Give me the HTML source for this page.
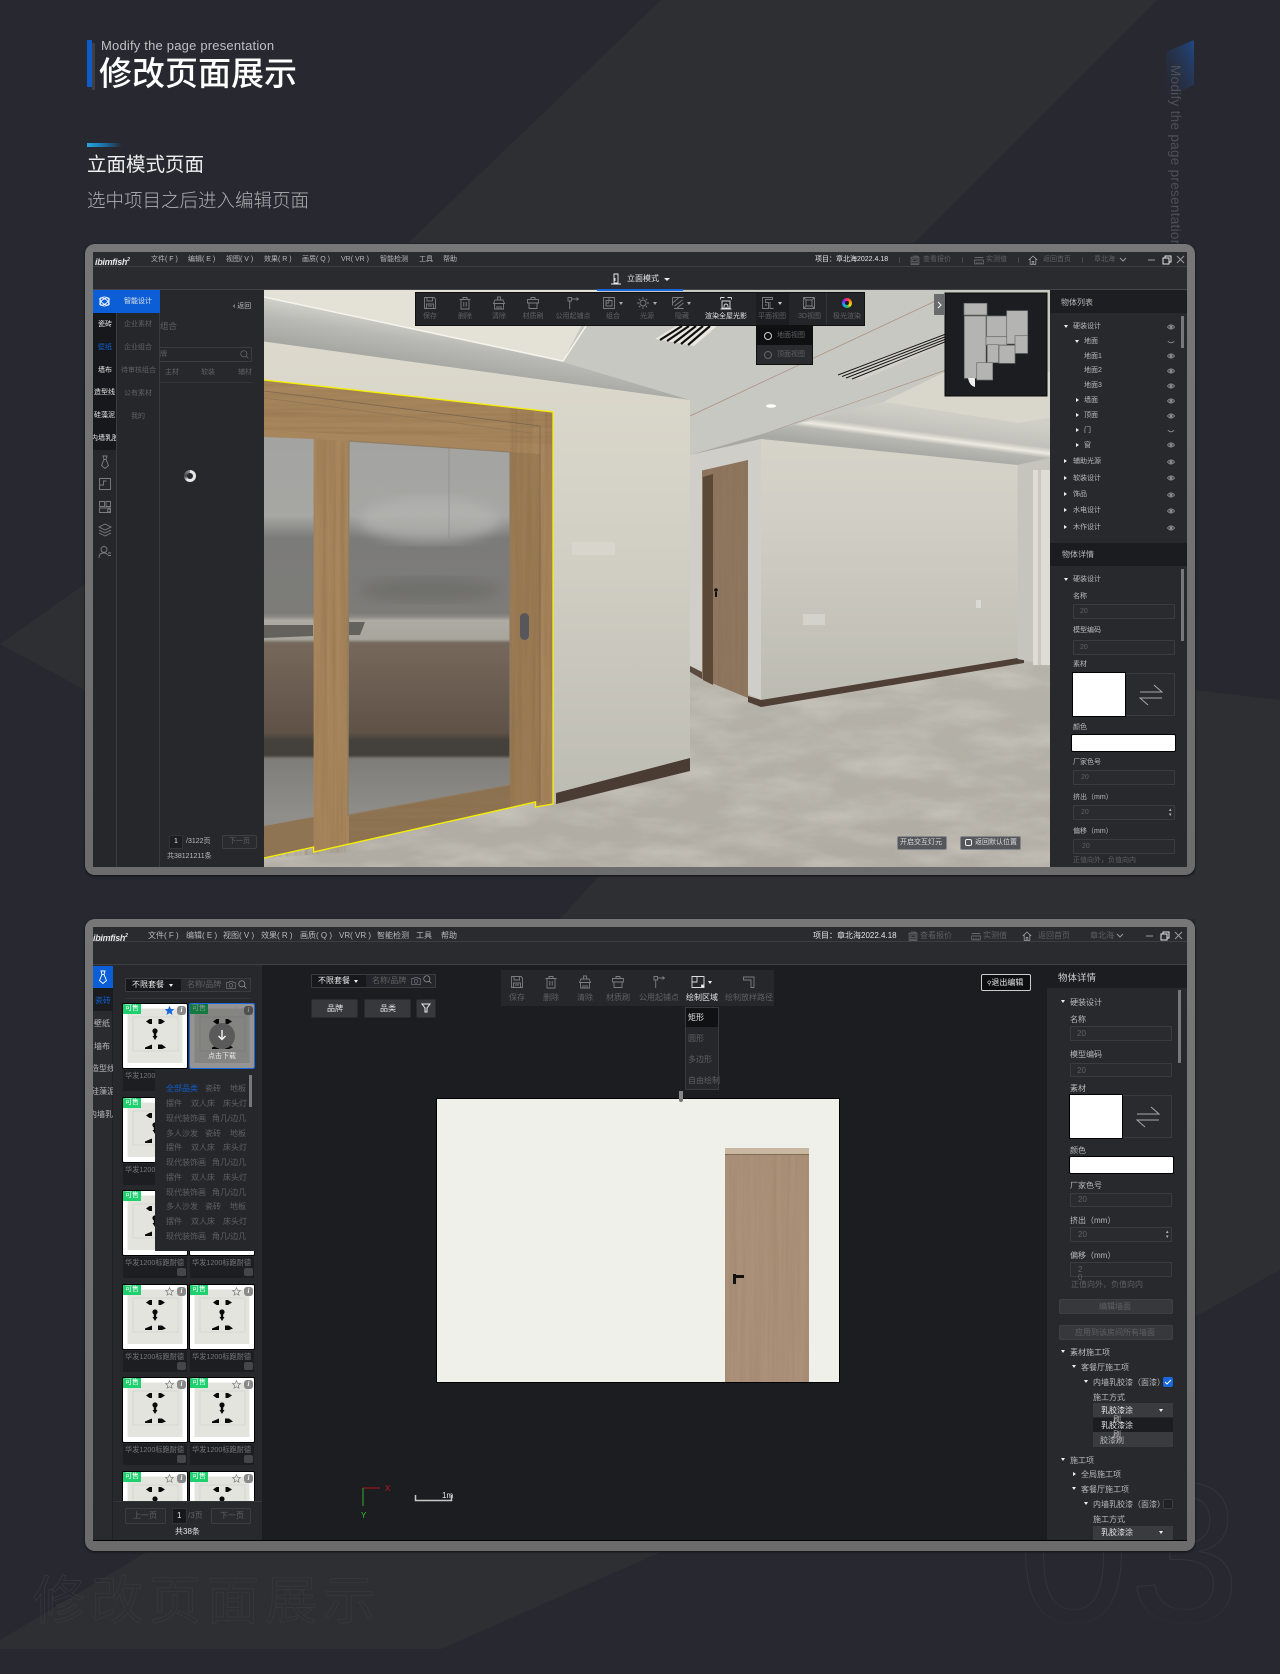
<!DOCTYPE html>
<html lang="zh"><head><meta charset="utf-8"><title>修改页面展示</title>
<style>
*{box-sizing:border-box}
html,body{margin:0;padding:0;background:#272830}
body{width:1280px;height:1649px;overflow:hidden;position:relative;font-family:"Liberation Sans","Noto Sans CJK SC",sans-serif}
p{position:absolute;margin:-6px 0 0;line-height:12px;white-space:nowrap;font-size:8px;color:#77787b}
.a{position:absolute}
.w{color:#e6e6e6}.m{color:#b9b9b9}.d{color:#5f6063}.b{color:#0d5fd0}
.s7{font-size:7px}
svg.i{position:absolute;width:14px;height:14px;stroke:#7c7d80;fill:none;stroke-width:.9;overflow:visible}
svg.e{position:absolute;width:8px;height:6px;stroke:#8b8c8f;fill:none;stroke-width:.9}
.clip{position:absolute;left:0;top:0;width:1280px;height:1649px}
.frame{position:absolute;background:linear-gradient(#777,#6c6c6c);border-radius:10px;box-shadow:0 1px 2px #111}
.inp{position:absolute;background:#2a2b2f;border:1px solid #3b3c40;border-radius:1px}
.tri{position:absolute;width:0;height:0;border-left:2.5px solid transparent;border-right:2.5px solid transparent;border-top:3.5px solid #eee}
.trr{position:absolute;width:0;height:0;border-top:2.5px solid transparent;border-bottom:2.5px solid transparent;border-left:3.5px solid #eee}
.btn{position:absolute;border:1px solid #3d3e42;border-radius:2px;background:#2a2b2f}
.c{position:absolute;width:64px;height:64px;background:#fff;box-shadow:0 0 0 1px #000;border-radius:1px}
.c>svg{position:absolute;left:0;top:0;width:64px;height:64px}
.c u{position:absolute;left:0;top:0;width:18px;height:10px;background:#1fd06f;color:#fff;font-size:7px;line-height:10px;text-align:center;text-decoration:none}
.c i{position:absolute;left:54px;top:2px;width:9px;height:9px;border-radius:3px;background:#8a8a8a;color:#fff;font:bold italic 7px/9px "Liberation Serif",serif;text-align:center}
.st{position:absolute;width:64px;height:21px;background:#1d1e22;color:#75767a;font-size:7.2px;line-height:12px;padding-left:2px;white-space:nowrap;overflow:hidden}
.st b{position:absolute;right:1px;bottom:2px;width:9px;height:8px;background:#45464a;border-radius:2px}
</style></head><body>
<svg width="0" height="0" style="position:absolute"><defs>
<symbol id="save" viewBox="0 0 14 14"><path d="M1.500 1.500h9.500l1.500 1.500v9.500h-11zM4 1.500v3.500h5.500v-3.500M3.500 12.500V8h7v4.500M5 10h4"/></symbol>
<symbol id="trash" viewBox="0 0 14 14"><path d="M1.500 3.500h11M5 3.500v-2h4v2M3 3.500v9.500h8V3.500M5.800 6v4.500M8.200 6v4.500"/></symbol>
<symbol id="clear" viewBox="0 0 14 14"><path d="M5.500 4V1h3v3M1.500 7.500L3 4h8l1.500 3.500zM2.500 7.500V13h9V7.500M5 10v3M7 10v3M9 10v3"/></symbol>
<symbol id="brush" viewBox="0 0 14 14"><path d="M5 3.500V1.500h4v2M1.500 3.500h11v3.500h-11zM3 7v5.500h8V7"/></symbol>
<symbol id="point" viewBox="0 0 14 14"><path d="M2 1.500h3.500v3.500H2zM3.700 5v8M5.500 3h6.500M10.500 1.500L12.500 3l-2 1.500"/></symbol>
<symbol id="group" viewBox="0 0 14 14"><path d="M1.500 1.500h11v11h-11zM4 4.500h6v5.500H4zM7 1.500v5M4 7h3"/></symbol>
<symbol id="light" viewBox="0 0 14 14"><circle cx="7" cy="7" r="3"/><path d="M7 1v2M7 11v2M1 7h2M11 7h2M2.800 2.800l1.400 1.400M9.800 9.800l1.400 1.400M2.800 11.200l1.400-1.400M9.800 4.200l1.400-1.400"/></symbol>
<symbol id="hide" viewBox="0 0 14 14"><path d="M1.500 1.500h11M1.500 1.500v8M1.500 7l6-5M3.500 10l8-6M6 12l6.500-5M3 12.500h9.500"/></symbol>
<symbol id="render" viewBox="0 0 14 14"><path d="M1.500 1.500h4M8.500 1.500h4M1.500 1.500v2M12.500 1.500v2M3 5h8v7H3zM5 11c0-4 4-4 4 0M1.500 13h11"/></symbol>
<symbol id="plan" viewBox="0 0 14 14"><path d="M1.500 1.500h10v2h-7v3h3v6h-6zM4 9h2M9 6v6.500h3.500"/></symbol>
<symbol id="d3" viewBox="0 0 14 14"><path d="M1.500 1.500h11v11h-11zM4 4h6v6H4zM1.500 1.500L4 4M12.500 1.500L10 4M1.500 12.500L4 10M12.500 12.500L10 10"/></symbol>
<symbol id="area" viewBox="0 0 14 14"><path d="M1 1.500h12v11H1zM1 7h5V1.500"/><rect x="10.500" y="10" width="2.500" height="2.500" fill="#fff"/></symbol>
<symbol id="path" viewBox="0 0 14 14"><path d="M1.500 2h10.500v10.500H9V5H1.500z"/></symbol>
<symbol id="eye" viewBox="0 0 8 6"><path d="M.5 3C2.500.3 5.500.3 7.500 3 5.500 5.700 2.500 5.700.5 3z"/><circle cx="4" cy="3" r="1.100" fill="#8b8c8f"/></symbol>
<symbol id="eoff" viewBox="0 0 8 6"><path d="M.8 2.200C3 4.400 5 4.400 7.200 2.200"/></symbol>
<symbol id="atom" viewBox="0 0 14 14"><ellipse cx="7" cy="7" rx="6" ry="2.600" transform="rotate(35 7 7)"/><ellipse cx="7" cy="7" rx="6" ry="2.600" transform="rotate(-35 7 7)"/><circle cx="7" cy="7" r="5"/></symbol>
<symbol id="tie" viewBox="0 0 14 14"><path d="M5 1h4L8 4.500l2.500 6L7 13.500l-3.500-3L6 4.500zM6 4.500h2"/></symbol>
<symbol id="room" viewBox="0 0 14 14"><path d="M1.500 1.500h11v11h-11zM1.500 8h4V4h3"/></symbol>
<symbol id="rooms" viewBox="0 0 14 14"><path d="M1.500 1.500h5v5h-5zM8 1.500h4.500v5H8zM1.500 8h11v4.500h-11z"/><circle cx="11" cy="10.500" r="1.500"/></symbol>
<symbol id="layer" viewBox="0 0 14 14"><path d="M7 1l6 3-6 3-6-3zM1 7l6 3 6-3M1 10l6 3 6-3"/></symbol>
<symbol id="user" viewBox="0 0 14 14"><circle cx="6" cy="4.500" r="3"/><path d="M1 13c0-4 2-5 5-5 1.500 0 3 .5 3.500 2M10 8h3M10 10.500h3"/></symbol>
<symbol id="home" viewBox="0 0 14 14"><path d="M1 7l6-5.500L13 7M3 5.500V13h8V5.500M5.800 13V9h2.400v4"/></symbol>
<symbol id="price" viewBox="0 0 14 14"><path d="M1.500 3h11v8.500h-11zM4 1.500h7v1.500M4 5.500h6v4H4zM1 13h12"/></symbol>
<symbol id="meas" viewBox="0 0 14 14"><path d="M1 3.500h12M1 7h12v5.500H1zM4 10v2.500M7 10v2.500M10 10v2.500"/></symbol>
<symbol id="search" viewBox="0 0 14 14"><circle cx="6" cy="6" r="4.800"/><path d="M9.500 9.500L13 13"/></symbol>
<symbol id="cam" viewBox="0 0 14 14"><path d="M1 3.500h3l1-1.500h4l1 1.500h3v8.500H1z"/><circle cx="7" cy="7.500" r="2.500"/></symbol>
<symbol id="swap" viewBox="0 0 24 22"><path d="M1 8h22L15 1M23 14H1l8 7" fill="none"/></symbol>
<symbol id="star" viewBox="0 0 14 14"><path d="M7 1l1.800 4 4.400.4-3.300 3 1 4.300L7 10.400l-3.900 2.300 1-4.300-3.300-3L5.200 5z"/></symbol>
<symbol id="sock" viewBox="0 0 64 64">
<rect x="4.500" y="4.500" width="55" height="54.500" fill="#e4e4df"/><rect x="10" y="13" width="45" height="34" fill="none" stroke="#d3d3ce" stroke-width=".7"/>
<g fill="#0a0a0a" stroke="none"><polygon points="23,17.500 26.500,15 29,15 29,20 26.500,20"/><polygon points="35.500,15 38,15 42,17.500 38,20 35.500,20"/><circle cx="32" cy="27" r="2.600"/><rect x="30.800" y="28" width="2.400" height="5"/><polygon points="29.500,32 34.500,32 32,36"/><polygon points="22,43.500 29,40.500 29,45 22,45"/><polygon points="35,40.500 39,40.500 43,43.500 39,45 35,45"/></g></symbol>
<filter id="wv" x="0" y="0" width="1" height="1"><feTurbulence type="fractalNoise" baseFrequency=".22 .006" numOctaves="3" seed="4"/><feColorMatrix values="0 0 0 0 .22  0 0 0 0 .13  0 0 0 0 .05  1.400 0 0 0 -.45"/><feComposite in2="SourceGraphic" operator="in"/></filter>
<filter id="wh" x="0" y="0" width="1" height="1"><feTurbulence type="fractalNoise" baseFrequency=".006 .22" numOctaves="3" seed="7"/><feColorMatrix values="0 0 0 0 .22  0 0 0 0 .13  0 0 0 0 .05  1.400 0 0 0 -.45"/><feComposite in2="SourceGraphic" operator="in"/></filter>
<filter id="mb" x="0" y="0" width="1" height="1"><feTurbulence type="fractalNoise" baseFrequency=".015 .045" numOctaves="4" seed="11"/><feColorMatrix values="0 0 0 0 .85  0 0 0 0 .83  0 0 0 0 .78  .6 0 0 0 -.22"/><feComposite in2="SourceGraphic" operator="in"/></filter>
<filter id="bl"><feGaussianBlur stdDeviation="6"/></filter>
<linearGradient id="gw" x1="0" y1="0" x2="0" y2="1"><stop offset="0" stop-color="#ddd9cd"/><stop offset=".5" stop-color="#d0cec3"/><stop offset="1" stop-color="#bdbcb3"/></linearGradient>
<linearGradient id="grw" x1="0" y1="0" x2="0" y2="1"><stop offset="0" stop-color="#d6d4c9"/><stop offset=".3" stop-color="#d1cfc5"/><stop offset="1" stop-color="#bcbbb2"/></linearGradient>
<linearGradient id="gf" x1="0" y1="0" x2="0" y2="1"><stop offset="0" stop-color="#b6b3aa"/><stop offset="1" stop-color="#b0aca3"/></linearGradient>
<linearGradient id="gg" gradientUnits="userSpaceOnUse" x1="0" y1="441" x2="0" y2="815"><stop offset="0" stop-color="#a3a3a1"/><stop offset=".2" stop-color="#a6a6a3"/><stop offset=".26" stop-color="#7b7b79"/><stop offset=".46" stop-color="#7d7c79"/><stop offset=".47" stop-color="#8c8a86"/><stop offset=".48" stop-color="#aeaba3"/><stop offset=".53" stop-color="#a8a59d"/><stop offset=".54" stop-color="#76695c"/><stop offset=".78" stop-color="#5f5246"/><stop offset=".8" stop-color="#44403b"/><stop offset=".84" stop-color="#44403b"/><stop offset=".85" stop-color="#7f7d79"/><stop offset="1" stop-color="#8f8e8a"/></linearGradient>
<linearGradient id="gr" gradientUnits="userSpaceOnUse" x1="264" y1="298" x2="257" y2="342"><stop offset="0" stop-color="#d0d0ca"/><stop offset=".4" stop-color="#b8b9b4"/><stop offset="1" stop-color="#a4a5a1"/></linearGradient>
<linearGradient id="gs" gradientUnits="userSpaceOnUse" x1="900" y1="405" x2="894" y2="452"><stop offset="0" stop-color="#d0cfc8"/><stop offset=".5" stop-color="#c2c1bb"/><stop offset=".62" stop-color="#eceae0"/><stop offset=".72" stop-color="#b8b8b3"/><stop offset="1" stop-color="#a8a8a4"/></linearGradient>
<linearGradient id="blu" x1="1" y1="0" x2="0" y2="1"><stop offset="0" stop-color="#1c5fc0"/><stop offset="1" stop-color="#2a3550" stop-opacity="0"/></linearGradient>
</defs></svg>

<!-- background shapes -->
<svg class="a" style="left:0;top:0" width="1280" height="1649">
<g fill="#2e2f33">
<polygon points="661,0 1157,0 914,243 408,243"/>
<polygon points="0,644 85,584 85,690"/>
<polygon points="1195,690 1280,700 1280,1270 1195,1317"/>
<polygon points="600,875 1195,875 1195,919 560,919"/>
<polygon points="147,1552 661,1552 441,1649 0,1649 0,1640"/>
</g>
<polygon points="1166,52 1194,40 1194,85 1166,98" fill="url(#blu)" opacity=".6"/>
</svg>

<!-- Titles -->
<div class="a" style="left:92px;top:43px;width:3px;height:47px;background:#3e4046"></div>
<div class="a" style="left:87px;top:40px;width:5px;height:47px;background:#0f5cc8"></div>
<p style="left:101px;top:46px;font-size:13px;line-height:18px;margin-top:-9px;color:#bfc0c3;letter-spacing:.2px">Modify the page presentation</p>
<p style="left:99px;top:74px;font-size:33px;line-height:44px;margin-top:-22px;color:#fff;font-weight:500">修改页面展示</p>
<div class="a" style="left:87px;top:143px;width:35px;height:4px;background:linear-gradient(90deg,#26a7e0,#1c6ea8 50%,transparent)"></div>
<p style="left:87px;top:165px;font-size:19.500px;line-height:28px;margin-top:-14px;color:#f0f0f0">立面模式页面</p>
<p style="left:87px;top:201px;font-size:18.500px;line-height:26px;margin-top:-13px;color:#aeafb2;font-weight:300">选中项目之后进入编辑页面</p>
<p style="left:1175px;top:65px;font-size:13.500px;line-height:16px;margin:0;color:#4f5057;transform-origin:0 0;transform:rotate(90deg) translateY(-8px);letter-spacing:.3px">Modify the page presentation</p>

<!-- decorative outlines -->
<p style="left:33px;top:1602px;font-size:52px;line-height:70px;margin-top:-35px;letter-spacing:6px;color:transparent;-webkit-text-stroke:.8px #37383e">修改页面展示</p>
<p style="left:1018px;top:1554px;font-size:200px;line-height:240px;margin-top:-120px;color:transparent;-webkit-text-stroke:1px #34353c;-webkit-mask-image:linear-gradient(#000 65%,transparent 85%)">03</p>

<!-- ================== FRAME 1 ================== -->
<div class="frame" style="left:85px;top:244px;width:1110px;height:631px"></div>
<div class="clip" style="clip-path:inset(252px 93px 782px 93px)">
<div class="a" style="left:93px;top:252px;width:1094px;height:615px;background:#28292d"></div>
<div class="a" style="left:93px;top:252px;width:1094px;height:38px;background:#2a2b2f"></div>
<div class="a" style="left:93px;top:266px;width:1094px;height:1px;background:#3d3e42"></div>
<div class="a" style="left:93px;top:289px;width:1094px;height:1px;background:#434448"></div>

<!-- Scene -->
<svg class="a" style="left:0;top:0" width="1280" height="1649">
<rect x="264" y="290" width="786" height="577" fill="#c8c8c2"/>
<polygon points="264,290 600,290 563,361 264,297" fill="#e4e1d7"/>
<polyline points="264,297 563,361 586,326" fill="none" stroke="#f5f3ec" stroke-width="1.500"/>
<polygon points="264,298 563,362 690,400 264,342" fill="url(#gr)"/>
<!-- center vent -->
<polygon points="655,339 694,346 717,326 676,326" fill="#e8e7e0"/>
<g stroke="#101010" stroke-width="2.200"><line x1="660" y1="340" x2="682" y2="326"/><line x1="667" y1="341" x2="689" y2="326"/><line x1="674" y1="343" x2="696" y2="326"/><line x1="681" y1="344" x2="703" y2="326"/><line x1="688" y1="345" x2="710" y2="326"/></g>
<!-- ceiling brown lines -->
<line x1="690" y1="416" x2="944" y2="297" stroke="#a99180" stroke-width=".8"/>
<line x1="690" y1="460" x2="946" y2="370" stroke="#a99180" stroke-width=".7"/>
<!-- right vent -->
<polygon points="836,375 862,380 946,343 946,333" fill="#d2d1cb"/>
<g stroke="#151515" stroke-width="1"><line x1="838" y1="375" x2="946" y2="334"/><line x1="842" y1="376.500" x2="946" y2="336.500"/><line x1="846" y1="378" x2="946" y2="339"/><line x1="852" y1="379" x2="946" y2="341.500"/></g>
<!-- right ceiling -->
<polygon points="883,402 945,372 1050,372 1050,418 1018,423" fill="#d9d6cb"/>
<polygon points="690,455 800,423 883,402 1018,423 1050,418 1050,458 1017,465 761,439" fill="url(#gs)"/>
<ellipse cx="771" cy="406" rx="5" ry="1.800" fill="#fff"/>
<!-- floor -->
<rect x="264" y="640" width="786" height="227" fill="url(#gf)"/>
<rect x="264" y="640" width="786" height="227" filter="url(#mb)" fill="#000"/>
<!-- corridor wall -->
<polygon points="690,455 761,439 761,700 690,666" fill="#cfcec8"/>
<polygon points="690,666 702,672 702,679 690,672" fill="#5b4a3e"/>
<polygon points="748,696 761,700 761,707 748,702" fill="#4e3e34"/>
<!-- corridor door -->
<polygon points="702,470.500 748,460 748,698 702,679" fill="#8e7660"/>
<polygon points="702,470.500 748,460 748,698 702,679" fill="#000" filter="url(#wv)" opacity=".3"/>
<polygon points="703,477 713,474 713,685 703,680" fill="#5b4837"/>
<circle cx="716" cy="590" r="1.800" fill="#111"/><rect x="715" y="592" width="2" height="5" fill="#111"/>
<!-- right wall -->
<polygon points="761,439 1017.600,465 1017.600,659 761,700" fill="url(#grw)"/>
<polygon points="761,700 1024,657 1024,663 761,707" fill="#503f35"/>
<rect x="803" y="614" width="22" height="11" fill="#d3d3cc"/><rect x="976" y="600" width="5" height="8" fill="#dadad4"/>
<!-- far right -->
<polygon points="1017.600,465 1050,458 1050,665 1017.600,659" fill="#c6c5bd"/>
<rect x="1033" y="470" width="17" height="195" fill="#dedcd4"/><rect x="1038" y="470" width="3" height="195" fill="#c9c8c0"/>
<!-- main wall -->
<polygon points="264,341.500 690,400 690,764 556,802 264,802" fill="url(#gw)"/>
<polygon points="556,793 690,758 690,771 556,804" fill="#4a3b33"/>
<rect x="572" y="542" width="43" height="13" fill="#d8d6cc"/>
<!-- door frame -->
<polygon points="264,380 553,412 553,804 535.500,807 535.500,802 313.600,852 313.600,847 264,858" fill="#a8865d"/>
<polygon points="264,380 553,412 553,445 264,430" fill="#000" filter="url(#wh)" opacity=".5"/>
<polygon points="264,437 349,441 349,852 264,858" fill="#000" filter="url(#wv)" opacity=".5"/>
<polygon points="510,408 553,412 553,804 535.500,807 535.500,802 510,808" fill="#000" filter="url(#wv)" opacity=".5"/>
<polygon points="510,452 540,454 540,802 510,808" fill="#7d6443" opacity=".3"/>
<polygon points="349,815 510,785 510,808 349,844" fill="#8e7453"/>
<polygon points="349,815 510,785 510,808 349,844" fill="#000" filter="url(#wh)" opacity=".4"/>
<polygon points="264,826 313.600,817 313.600,847 264,858" fill="#8e7453"/>
<polyline points="264,391 540,426 540,802" fill="none" stroke="#7a6750" stroke-width=".8"/>
<polyline points="264,398 532,433" fill="none" stroke="#8c7759" stroke-width=".8"/>
<!-- glass -->
<polygon points="349,441 510,452 510,785 348,815" fill="url(#gg)"/>
<polygon points="264,437 313.600,439 313.600,817 264,826" fill="url(#gg)"/>
<polygon points="264,625 313,625 313,636 264,638" fill="#333330" opacity=".6"/>
<polygon points="349,622 365,622 360,635 349,635" fill="#333330" opacity=".6"/>
<ellipse cx="430" cy="520" rx="70" ry="22" fill="#b5b5b2" opacity=".7" filter="url(#bl)"/>
<ellipse cx="430" cy="590" rx="70" ry="12" fill="#6b6a66" opacity=".7" filter="url(#bl)"/>
<line x1="449" y1="447" x2="449" y2="538" stroke="#8b8b88" stroke-width=".7"/>
<polygon points="349,441 510,452 510,785 348,815" fill="none" stroke="#8f7c62" stroke-width="1.200"/>
<rect x="520" y="613" width="9" height="27" rx="4.500" fill="#57565a"/>
<!-- yellow outline -->
<polyline points="264,380 553,412 553,804 535.500,807 535.500,802 313.600,852 313.600,847 264,858" fill="none" stroke="#f6f000" stroke-width="1.300"/>
<!-- minimap -->
<rect x="945" y="293" width="102" height="103" fill="#1c1d20" stroke="#0a0a0a"/>
<g fill="#b4b5b3" stroke="#6d6e6e" stroke-width=".7">
<rect x="964" y="303.300" width="23" height="11.700"/><rect x="964.300" y="316" width="21.700" height="62.300"/><rect x="986.700" y="316" width="20" height="20.700"/><rect x="1006.700" y="310.700" width="21" height="33.300"/><rect x="986" y="336.700" width="20.700" height="8.300"/><rect x="1015" y="335.700" width="12.700" height="17.700"/><rect x="987.300" y="344.700" width="11.300" height="18"/><rect x="999" y="345.300" width="16" height="18"/><rect x="976.700" y="362.700" width="16" height="17.300"/></g>
<path d="M968 378h7v9c-4-1-6-4-7-9z" fill="#eee"/>
<rect x="934" y="294" width="11" height="21" fill="#6a6b6d"/>
<path d="M938 302l3 3-3 3" fill="none" stroke="#fff"/>
</svg>

<!-- Scene top strip & small buttons -->
<div class="a" style="left:597px;top:289px;width:86px;height:1.500px;background:#1668dc"></div>
<div class="btn" style="left:897px;top:836px;width:50px;height:14px;background:#55565a;border-color:#85868a"></div><p class="w s7" style="left:900px;top:843px;color:#ddd">开启交互灯元</p>
<div class="btn" style="left:960px;top:836px;width:61px;height:14px;background:#55565a;border-color:#85868a"></div><p class="w s7" style="left:975px;top:843px;color:#ddd">返回默认位置</p>
<div class="a" style="left:965px;top:839px;width:7px;height:7px;border:1px solid #eee;border-radius:2px"></div>

<!-- Menu -->
<p class="w" style="left:95px;top:260px;font-size:9px;font-weight:bold;letter-spacing:-.3px;font-style:italic">ibimfish<span style="font-size:5px;vertical-align:super">2</span></p>
<p class="m s7" style="left:151px;top:260px">文件( F )</p><p class="m s7" style="left:188px;top:260px">编辑( E )</p><p class="m s7" style="left:226px;top:260px">视图( V )</p><p class="m s7" style="left:264px;top:260px">效果( R )</p><p class="m s7" style="left:302px;top:260px">画质( Q )</p><p class="m s7" style="left:341px;top:260px">VR( VR )</p><p class="m s7" style="left:380px;top:260px">智能检测</p><p class="m s7" style="left:419px;top:260px">工具</p><p class="m s7" style="left:443px;top:260px">帮助</p>
<p class="w s7" style="left:815px;top:260px">项目：章北海2022.4.18</p>
<svg class="i" style="left:910px;top:255px;width:10px;height:10px"><use href="#price"/></svg><p class="d s7" style="left:923px;top:260px">查看报价</p>
<svg class="i" style="left:974px;top:255px;width:10px;height:10px"><use href="#meas"/></svg><p class="d s7" style="left:986px;top:260px">实测值</p>
<svg class="i" style="left:1028px;top:255px;width:10px;height:10px;stroke:#bbb"><use href="#home"/></svg><p class="d s7" style="left:1043px;top:260px">返回首页</p>
<p class="d s7" style="left:1094px;top:260px">章北海</p>
<svg class="a" style="left:1119px;top:257px" width="8" height="6" fill="none" stroke="#999"><path d="M1 1l3 3 3-3"/></svg>
<div class="a" style="left:899px;top:257px;width:1px;height:6px;background:#45464a"></div><div class="a" style="left:962px;top:257px;width:1px;height:6px;background:#45464a"></div><div class="a" style="left:1018px;top:257px;width:1px;height:6px;background:#45464a"></div><div class="a" style="left:1082px;top:257px;width:1px;height:6px;background:#45464a"></div>
<svg class="a" style="left:1148px;top:254px" width="38" height="12" fill="none" stroke="#9a9b9e"><path d="M0 6h7"/><path d="M15 4h6v6h-6zM17 4V2h6v6h-2" stroke="#e6e6e6"/><path d="M29 2l7 7M36 2l-7 7"/></svg>
<svg class="i" style="left:610px;top:273px;width:12px;height:12px;stroke:#eee"><path d="M4 1h4v9H4zM1 11h10M5 5v3"/></svg>
<p class="w" style="left:627px;top:279px">立面模式</p><div class="tri" style="left:664px;top:278px;border-left-width:3px;border-right-width:3px"></div>

<!-- Left columns -->
<div class="a" style="left:160px;top:290px;width:104px;height:577px;background:#27282b"></div>
<p class="m s7" style="left:233px;top:307px"><span style="font-weight:bold">‹</span> 返回</p>
<p class="d" style="left:160px;top:326px;font-size:8.500px">组合</p>
<div class="inp" style="left:150px;top:347px;width:102px;height:15px;background:#26272a"></div><p class="d s7" style="left:160px;top:355px">牌</p>
<svg class="i" style="left:240px;top:350px;width:9px;height:9px"><use href="#search"/></svg>
<p class="d s7" style="left:165px;top:373px">主材</p><p class="d s7" style="left:201px;top:373px">软装</p><p class="d s7" style="left:238px;top:373px">辅材</p>
<div class="a" style="left:160px;top:382px;width:92px;height:1px;background:#34353a"></div>
<div class="a" style="left:184px;top:470px;width:12px;height:12px;border-radius:50%;background:conic-gradient(#e8e8e8 0 60%,#444 75%,#999 100%)"></div><div class="a" style="left:187px;top:473px;width:6px;height:6px;border-radius:50%;background:#27282b"></div>
<div class="a" style="left:169px;top:835px;width:14px;height:14px;background:#1d1e21;border:1px solid #333"></div><p class="w s7" style="left:174px;top:842px">1</p>
<p class="m s7" style="left:186px;top:842px">/3122页</p>
<div class="btn" style="left:222px;top:835px;width:35px;height:14px"></div><p class="d s7" style="left:229px;top:842px">下一页</p>
<p class="m s7" style="left:167px;top:857px">共38121211条</p>

<div class="a" style="left:116px;top:290px;width:44px;height:577px;background:#26272a;border-right:1px solid #3a3b3f;border-left:1px solid #3a3b3f"></div>
<div class="a" style="left:116px;top:290px;width:44px;height:23px;background:#0c5ed6"></div><p class="w s7" style="left:124px;top:302px">智能设计</p>
<p class="d s7" style="left:124px;top:325px">企业素材</p><p class="d s7" style="left:124px;top:348px">企业组合</p><p class="d s7" style="left:121px;top:371px">待审核组合</p><p class="d s7" style="left:124px;top:394px">公有素材</p><p class="d s7" style="left:131px;top:417px">我的</p>

<div class="a" style="left:93px;top:290px;width:23px;height:577px;background:#26272a"></div>
<div class="a" style="left:93px;top:313px;width:23px;height:137px;background:#17181b"></div>
<div class="a" style="left:93px;top:290px;width:23px;height:23px;background:#0c5ed6"></div>
<svg class="i" style="left:98px;top:295px;width:13px;height:13px;stroke:#fff"><use href="#atom"/></svg>
<div class="clip" style="clip-path:inset(0 1164px 0 93px)">
<p class="w s7" style="left:98px;top:325px">瓷砖</p><p class="b s7" style="left:98px;top:348px">壁纸</p><p class="w s7" style="left:98px;top:371px">墙布</p><p class="w s7" style="left:94px;top:393px">造型线</p><p class="w s7" style="left:94px;top:416px">硅藻泥</p><p class="w s7" style="left:91px;top:439px">内墙乳胶漆</p>
</div>
<svg class="i" style="left:98px;top:455px"><use href="#tie"/></svg>
<svg class="i" style="left:98px;top:477px"><use href="#room"/></svg>
<svg class="i" style="left:98px;top:500px"><use href="#rooms"/></svg>
<svg class="i" style="left:98px;top:523px"><use href="#layer"/></svg>
<svg class="i" style="left:98px;top:545px"><use href="#user"/></svg>

<!-- Toolbar -->
<div class="a" style="left:415px;top:292px;width:450px;height:34px;background:#242528;border:1px solid #111"></div>
<svg class="i" style="left:423px;top:296px"><use href="#save"/></svg><p class="d s7" style="left:423px;top:317px">保存</p>
<svg class="i" style="left:458px;top:296px"><use href="#trash"/></svg><p class="d s7" style="left:458px;top:317px">删除</p>
<svg class="i" style="left:492px;top:296px"><use href="#clear"/></svg><p class="d s7" style="left:492px;top:317px">清除</p>
<svg class="i" style="left:526px;top:296px"><use href="#brush"/></svg><p class="d s7" style="left:522.500px;top:317px">材质刷</p>
<svg class="i" style="left:566px;top:296px"><use href="#point"/></svg><p class="d s7" style="left:555.500px;top:317px">公用起铺点</p>
<svg class="i" style="left:602px;top:296px"><use href="#group"/></svg><div class="tri" style="left:619px;top:302px;border-top-color:#aaa"></div><p class="d s7" style="left:606px;top:317px">组合</p>
<svg class="i" style="left:636px;top:296px"><use href="#light"/></svg><div class="tri" style="left:653px;top:302px;border-top-color:#aaa"></div><p class="d s7" style="left:640px;top:317px">光源</p>
<svg class="i" style="left:671px;top:296px"><use href="#hide"/></svg><div class="tri" style="left:687px;top:302px;border-top-color:#aaa"></div><p class="d s7" style="left:675px;top:317px">隐藏</p>
<svg class="i" style="left:719px;top:296px;stroke:#ddd"><use href="#render"/></svg><p class="w s7" style="left:705px;top:317px">渲染全屋光影</p>
<div class="a" style="left:756px;top:293px;width:33px;height:32px;background:#1c1d20"></div>
<svg class="i" style="left:761px;top:296px"><use href="#plan"/></svg><div class="tri" style="left:778px;top:302px;border-top-color:#ccc"></div><p class="d s7" style="left:758px;top:317px">平面视图</p>
<svg class="i" style="left:802px;top:296px"><use href="#d3"/></svg><p class="d s7" style="left:798px;top:317px">3D视图</p>
<div class="a" style="left:826px;top:293px;width:1px;height:32px;background:#33343a"></div>
<div class="a" style="left:842px;top:298px;width:10px;height:10px;border-radius:50%;background:conic-gradient(#ff2a6a,#ff8a00,#ffe100,#26c06a,#18a8ff,#7a2cff,#ff2a6a)"></div><div class="a" style="left:845px;top:301px;width:4px;height:4px;border-radius:50%;background:#1a1a1a"></div>
<p class="d s7" style="left:833px;top:317px">极光渲染</p>
<!-- dropdown -->
<div class="a" style="left:756px;top:326px;width:57px;height:39px;background:#2a2b2e;border:1px solid #111"></div>
<div class="a" style="left:757px;top:327px;width:55px;height:18px;background:#0f1012"></div>
<div class="a" style="left:764px;top:332px;width:8px;height:8px;border:1px solid #ccc;border-radius:50%"></div><p class="d s7" style="left:777px;top:336px">地面视图</p>
<div class="a" style="left:764px;top:351px;width:8px;height:8px;border:1px solid #666;border-radius:50%"></div><p class="d s7" style="left:777px;top:355px">顶面视图</p>

<!-- Right panel -->
<div class="a" style="left:1050px;top:290px;width:137px;height:577px;background:#28292d"></div>
<div class="a" style="left:1050px;top:290px;width:137px;height:23px;background:#1d1e21"></div><p class="m" style="left:1061px;top:303px">物体列表</p>
<div class="tri" style="left:1064px;top:325px"></div><p class="m s7" style="left:1073px;top:327px">硬装设计</p>
<div class="tri" style="left:1075px;top:340px"></div><p class="m s7" style="left:1084px;top:342px">地面</p>
<p class="m s7" style="left:1084px;top:356.500px">地面1</p><p class="m s7" style="left:1084px;top:371px">地面2</p><p class="m s7" style="left:1084px;top:386px">地面3</p>
<div class="trr" style="left:1076px;top:398px"></div><p class="m s7" style="left:1084px;top:401px">墙面</p>
<div class="trr" style="left:1076px;top:413px"></div><p class="m s7" style="left:1084px;top:416px">顶面</p>
<div class="trr" style="left:1076px;top:428px"></div><p class="m s7" style="left:1084px;top:430.500px">门</p>
<div class="trr" style="left:1076px;top:443px"></div><p class="m s7" style="left:1084px;top:445.500px">窗</p>
<div class="trr" style="left:1064px;top:459px"></div><p class="m s7" style="left:1073px;top:462px">辅助光源</p>
<div class="trr" style="left:1064px;top:476px"></div><p class="m s7" style="left:1073px;top:478.500px">软装设计</p>
<div class="trr" style="left:1064px;top:492px"></div><p class="m s7" style="left:1073px;top:495px">饰品</p>
<div class="trr" style="left:1064px;top:508px"></div><p class="m s7" style="left:1073px;top:511px">水电设计</p>
<div class="trr" style="left:1064px;top:525px"></div><p class="m s7" style="left:1073px;top:528px">木作设计</p>
<svg class="e" style="left:1167px;top:324px"><use href="#eye"/></svg><svg class="e" style="left:1167px;top:339px"><use href="#eoff"/></svg><svg class="e" style="left:1167px;top:353px"><use href="#eye"/></svg><svg class="e" style="left:1167px;top:368px"><use href="#eye"/></svg><svg class="e" style="left:1167px;top:383px"><use href="#eye"/></svg><svg class="e" style="left:1167px;top:398px"><use href="#eye"/></svg><svg class="e" style="left:1167px;top:413px"><use href="#eye"/></svg><svg class="e" style="left:1167px;top:428px"><use href="#eoff"/></svg><svg class="e" style="left:1167px;top:442px"><use href="#eye"/></svg><svg class="e" style="left:1167px;top:459px"><use href="#eye"/></svg><svg class="e" style="left:1167px;top:475px"><use href="#eye"/></svg><svg class="e" style="left:1167px;top:492px"><use href="#eye"/></svg><svg class="e" style="left:1167px;top:508px"><use href="#eye"/></svg><svg class="e" style="left:1167px;top:525px"><use href="#eye"/></svg>
<div class="a" style="left:1181px;top:316px;width:3px;height:32px;background:#77787b"></div>
<div class="a" style="left:1050px;top:543px;width:137px;height:23px;background:#1b1c1f"></div><p class="m" style="left:1062px;top:555px">物体详情</p>
<div class="tri" style="left:1064px;top:578px"></div><p class="m s7" style="left:1073px;top:580px">硬装设计</p>
<p class="m s7" style="left:1073px;top:597px">名称</p><div class="inp" style="left:1073px;top:604px;width:102px;height:15px"></div><p class="d s7" style="left:1080px;top:612px">20</p>
<p class="m s7" style="left:1073px;top:631px">模型编码</p><div class="inp" style="left:1073px;top:640px;width:102px;height:15px"></div><p class="d s7" style="left:1080px;top:648px">20</p>
<p class="m s7" style="left:1073px;top:665px">素材</p><div class="inp" style="left:1073px;top:673px;width:102px;height:43px"></div><div class="a" style="left:1073px;top:673px;width:52px;height:43px;background:#fff;box-shadow:0 0 0 1px #000"></div>
<svg class="a" style="left:1139px;top:684px" width="24" height="22" stroke="#aaa" fill="none"><use href="#swap"/></svg>
<p class="m s7" style="left:1073px;top:728px">颜色</p><div class="a" style="left:1072px;top:735px;width:103px;height:16px;background:#fff;box-shadow:0 0 0 1px #000;border-radius:1px"></div>
<p class="m s7" style="left:1073px;top:763px">厂家色号</p><div class="inp" style="left:1073px;top:770px;width:102px;height:15px"></div><p class="d s7" style="left:1081px;top:778px">20</p>
<p class="m s7" style="left:1073px;top:798px">挤出（mm）</p><div class="inp" style="left:1073px;top:805px;width:102px;height:15px"></div><p class="d s7" style="left:1081px;top:813px">20</p><p class="m" style="left:1169px;top:813px;font-size:5px;line-height:5px;margin-top:-5px;white-space:normal;width:5px">▴<br>▾</p>
<p class="m s7" style="left:1073px;top:832px">偏移（mm）</p><div class="inp" style="left:1073px;top:839px;width:102px;height:15px"></div><p class="d s7" style="left:1082px;top:847px">20</p>
<p class="d s7" style="left:1073px;top:861px">正值向外，负值向内</p>
<div class="a" style="left:1181px;top:569px;width:3px;height:72px;background:#77787b"></div>
</div>

<!-- ================== FRAME 2 ================== -->
<div class="frame" style="left:85px;top:919px;width:1110px;height:632px"></div>
<div class="clip" style="clip-path:inset(927px 93px 108px 93px)">
<div class="a" style="left:93px;top:927px;width:1094px;height:614px;background:#1c1d20"></div>
<div class="a" style="left:93px;top:927px;width:1094px;height:38px;background:#2a2b2f"></div>
<div class="a" style="left:93px;top:941px;width:1094px;height:1px;background:#3d3e42"></div>
<div class="a" style="left:93px;top:964px;width:1094px;height:1px;background:#3e3f43"></div>
<p class="w" style="left:93px;top:936px;font-size:9px;font-weight:bold;letter-spacing:-.3px;font-style:italic">ibimfish<span style="font-size:5px;vertical-align:super">2</span></p>
<p class="m" style="left:148px;top:936px">文件( F )</p><p class="m" style="left:186px;top:936px">编辑( E )</p><p class="m" style="left:223px;top:936px">视图( V )</p><p class="m" style="left:261px;top:936px">效果( R )</p><p class="m" style="left:300px;top:936px">画质( Q )</p><p class="m" style="left:339px;top:936px">VR( VR )</p><p class="m" style="left:377px;top:936px">智能检测</p><p class="m" style="left:416px;top:936px">工具</p><p class="m" style="left:441px;top:936px">帮助</p>
<p class="w" style="left:813px;top:936px">项目：章北海2022.4.18</p>
<svg class="i" style="left:908px;top:931px;width:10px;height:10px"><use href="#price"/></svg><p class="d" style="left:920px;top:936px">查看报价</p>
<svg class="i" style="left:971px;top:931px;width:10px;height:10px"><use href="#meas"/></svg><p class="d" style="left:983px;top:936px">实测值</p>
<svg class="i" style="left:1022px;top:931px;width:10px;height:10px;stroke:#bbb"><use href="#home"/></svg><p class="d" style="left:1038px;top:936px">返回首页</p>
<p class="d" style="left:1090px;top:936px">章北海</p>
<svg class="a" style="left:1116px;top:933px" width="8" height="6" fill="none" stroke="#999"><path d="M1 1l3 3 3-3"/></svg>
<svg class="a" style="left:1146px;top:930px" width="38" height="12" fill="none" stroke="#9a9b9e"><path d="M0 6h7"/><path d="M15 4h6v6h-6zM17 4V2h6v6h-2" stroke="#e6e6e6"/><path d="M29 2l7 7M36 2l-7 7"/></svg>

<!-- left column -->
<div class="a" style="left:113px;top:965px;width:149px;height:576px;background:#27282c"></div>
<div class="a" style="left:93px;top:965px;width:20px;height:576px;background:#2a2b2f;border-right:1px solid #1f2023"></div>
<div class="a" style="left:93px;top:966px;width:20px;height:22px;background:#0c5ed6"></div>
<svg class="i" style="left:96px;top:970px;stroke:#fff"><use href="#tie"/></svg>
<div class="a" style="left:93px;top:988px;width:20px;height:23px;background:#1b1c1f"></div>
<div class="clip" style="clip-path:inset(0 1167px 0 93px)">
<p class="b" style="left:95px;top:1001px">瓷砖</p><p class="m" style="left:94px;top:1024px">壁纸</p><p class="m" style="left:94px;top:1047px">墙布</p><p class="m" style="left:91px;top:1069px">造型线</p><p class="m" style="left:91px;top:1092px">硅藻泥</p><p class="m" style="left:89px;top:1115px">内墙乳胶漆</p>
</div>
<div class="inp" style="left:125px;top:978px;width:126px;height:14px;background:#2a2b2f"></div><div class="a" style="left:126px;top:979px;width:55px;height:12px;background:#17181b"></div>
<p class="w" style="left:132px;top:985px">不限套餐</p><div class="tri" style="left:169px;top:984px"></div><p class="d" style="left:187px;top:985px">名称/品牌</p>
<svg class="i" style="left:226px;top:980px;width:10px;height:10px"><use href="#cam"/></svg><svg class="i" style="left:238px;top:980px;width:9px;height:9px;stroke:#bbb"><use href="#search"/></svg>
<div class="a" style="left:125px;top:998px;width:126px;height:1px;background:#33343a"></div>

<!-- cards rows -->
<div class="c" style="left:123px;top:1004px"><svg><use href="#sock"/></svg><u>可售</u><svg style="left:42px;top:2px;width:9px;height:9px;fill:#1668dc;stroke:#1668dc"><use href="#star"/></svg><i>i</i></div>
<div class="st" style="left:123px;top:1070px">华发1200标跑耐德</div>
<div class="c" style="left:190px;top:1004px;box-shadow:0 0 0 1px #1668dc"><svg><use href="#sock"/></svg><u>可售</u><i>i</i>
<div class="a" style="left:0;top:0;width:64px;height:64px;background:rgba(0,0,0,.42)"></div>
<div class="a" style="left:19px;top:19px;width:26px;height:26px;border-radius:50%;background:#5a5a5a"></div>
<svg style="left:0;top:0" stroke="#fff" fill="none" stroke-width="1.300"><path d="M32 26v9M28.500 32l3.500 3.500 3.500-3.500"/></svg>
<p class="w s7" style="left:18px;top:53px">点击下载</p>
<svg style="left:42px;top:2px;width:9px;height:9px;fill:none;stroke:#888"><use href="#star"/></svg></div>
<div class="st" style="left:190px;top:1070px">华发1200标跑耐德<b></b></div>
<div class="c" style="left:123px;top:1098px"><svg><use href="#sock"/></svg><u>可售</u></div>
<div class="st" style="left:123px;top:1164px">华发1200标跑耐德</div>
<div class="c" style="left:190px;top:1098px"></div><div class="st" style="left:190px;top:1164px"></div>
<div class="c" style="left:123px;top:1191px"><svg><use href="#sock"/></svg><u>可售</u></div>
<div class="st" style="left:123px;top:1257px">华发1200标跑耐德<b></b></div>
<div class="c" style="left:190px;top:1191px"></div>
<div class="st" style="left:190px;top:1257px">华发1200标跑耐德<b></b></div>

<div class="c" style="left:123px;top:1285px"><svg><use href="#sock"/></svg><u>可售</u><svg style="left:42px;top:2px;width:9px;height:9px;fill:none;stroke:#777"><use href="#star"/></svg><i>i</i></div>
<div class="st" style="left:123px;top:1351px">华发1200标跑耐德<b></b></div>
<div class="c" style="left:190px;top:1285px"><svg><use href="#sock"/></svg><u>可售</u><svg style="left:42px;top:2px;width:9px;height:9px;fill:none;stroke:#777"><use href="#star"/></svg><i>i</i></div>
<div class="st" style="left:190px;top:1351px">华发1200标跑耐德<b></b></div>
<div class="c" style="left:123px;top:1378px"><svg><use href="#sock"/></svg><u>可售</u><svg style="left:42px;top:2px;width:9px;height:9px;fill:none;stroke:#777"><use href="#star"/></svg><i>i</i></div>
<div class="st" style="left:123px;top:1444px">华发1200标跑耐德<b></b></div>
<div class="c" style="left:190px;top:1378px"><svg><use href="#sock"/></svg><u>可售</u><svg style="left:42px;top:2px;width:9px;height:9px;fill:none;stroke:#777"><use href="#star"/></svg><i>i</i></div>
<div class="st" style="left:190px;top:1444px">华发1200标跑耐德<b></b></div>
<div class="c" style="left:123px;top:1472px"><svg><use href="#sock"/></svg><u>可售</u><svg style="left:42px;top:2px;width:9px;height:9px;fill:none;stroke:#777"><use href="#star"/></svg><i>i</i></div>
<div class="c" style="left:190px;top:1472px"><svg><use href="#sock"/></svg><u>可售</u><svg style="left:42px;top:2px;width:9px;height:9px;fill:none;stroke:#777"><use href="#star"/></svg><i>i</i></div>

<!-- category dropdown -->
<div class="a" style="left:155px;top:1070px;width:100px;height:181px;background:#26272a"></div>
<div class="a" style="left:249px;top:1075px;width:3px;height:32px;background:#77787b"></div>
<p class="b" style="left:166px;top:1089px">全部品类</p><p class="d" style="left:205px;top:1089px">瓷砖</p><p class="d" style="left:230px;top:1089px">地板</p>
<p class="d" style="left:166px;top:1104px">摆件</p><p class="d" style="left:191px;top:1104px">双人床</p><p class="d" style="left:223px;top:1104px">床头灯</p>
<p class="d" style="left:166px;top:1119px">现代装饰画</p><p class="d" style="left:212px;top:1119px">角几/边几</p>
<p class="d" style="left:166px;top:1134px">多人沙发</p><p class="d" style="left:205px;top:1134px">瓷砖</p><p class="d" style="left:230px;top:1134px">地板</p>
<p class="d" style="left:166px;top:1148px">摆件</p><p class="d" style="left:191px;top:1148px">双人床</p><p class="d" style="left:223px;top:1148px">床头灯</p>
<p class="d" style="left:166px;top:1163px">现代装饰画</p><p class="d" style="left:212px;top:1163px">角几/边几</p>
<p class="d" style="left:166px;top:1178px">摆件</p><p class="d" style="left:191px;top:1178px">双人床</p><p class="d" style="left:223px;top:1178px">床头灯</p>
<p class="d" style="left:166px;top:1193px">现代装饰画</p><p class="d" style="left:212px;top:1193px">角几/边几</p>
<p class="d" style="left:166px;top:1207px">多人沙发</p><p class="d" style="left:205px;top:1207px">瓷砖</p><p class="d" style="left:230px;top:1207px">地板</p>
<p class="d" style="left:166px;top:1222px">摆件</p><p class="d" style="left:191px;top:1222px">双人床</p><p class="d" style="left:223px;top:1222px">床头灯</p>
<p class="d" style="left:166px;top:1237px">现代装饰画</p><p class="d" style="left:212px;top:1237px">角几/边几</p>

<!-- left pager -->
<div class="a" style="left:113px;top:1501px;width:149px;height:40px;background:#28292c;border-top:1px solid #35363a"></div>
<div class="btn" style="left:125px;top:1508px;width:41px;height:16px"></div><p class="d" style="left:133px;top:1516px">上一页</p>
<div class="a" style="left:172px;top:1508px;width:15px;height:16px;background:#17181b;border:1px solid #333"></div><p class="w" style="left:177px;top:1516px">1</p>
<p class="d" style="left:188px;top:1516px">/3页</p>
<div class="btn" style="left:211px;top:1508px;width:40px;height:16px"></div><p class="d" style="left:220px;top:1516px">下一页</p>
<p class="w" style="left:175px;top:1532px">共38条</p>

<!-- Canvas controls -->
<div class="inp" style="left:311px;top:974px;width:125px;height:14px;background:#24252a"></div><div class="a" style="left:312px;top:975px;width:54px;height:12px;background:#17181b"></div>
<p class="w" style="left:318px;top:981px">不限套餐</p><div class="tri" style="left:354px;top:980px"></div><p class="d" style="left:372px;top:981px">名称/品牌</p>
<svg class="i" style="left:411px;top:976px;width:10px;height:10px"><use href="#cam"/></svg><svg class="i" style="left:423px;top:975px;width:9px;height:9px;stroke:#bbb"><use href="#search"/></svg>
<div class="btn" style="left:311px;top:999px;width:47px;height:19px;background:#37383c;border-color:#2a2b2e"></div><p class="w" style="left:327px;top:1009px">品牌</p>
<div class="btn" style="left:364px;top:999px;width:47px;height:19px;background:#37383c;border-color:#2a2b2e"></div><p class="w" style="left:380px;top:1009px">品类</p>
<div class="btn" style="left:416px;top:999px;width:20px;height:19px;background:#37383c;border-color:#2a2b2e"></div>
<svg class="a" style="left:421px;top:1003px" width="10" height="10" fill="none" stroke="#eee"><path d="M1 1h8L6 5v4H4V5z"/></svg>

<div class="a" style="left:501px;top:970px;width:273px;height:36px;background:#26272a"></div>
<svg class="i" style="left:510px;top:975px"><use href="#save"/></svg><p class="d" style="left:509px;top:998px">保存</p>
<svg class="i" style="left:544px;top:975px"><use href="#trash"/></svg><p class="d" style="left:543px;top:998px">删除</p>
<svg class="i" style="left:578px;top:975px"><use href="#clear"/></svg><p class="d" style="left:577px;top:998px">清除</p>
<svg class="i" style="left:611px;top:975px"><use href="#brush"/></svg><p class="d" style="left:606px;top:998px">材质刷</p>
<svg class="i" style="left:652px;top:975px"><use href="#point"/></svg><p class="d" style="left:639px;top:998px">公用起铺点</p>
<svg class="i" style="left:691px;top:975px;stroke:#ddd"><use href="#area"/></svg><div class="tri" style="left:708px;top:981px"></div><p class="w" style="left:686px;top:998px">绘制区域</p>
<svg class="i" style="left:742px;top:975px"><use href="#path"/></svg><p class="d" style="left:725px;top:998px">绘制放样路径</p>

<div class="a" style="left:685px;top:1007px;width:34px;height:83px;background:#26272a;border:1px solid #3a3b3f"></div>
<div class="a" style="left:686px;top:1008px;width:32px;height:19px;background:#101113"></div>
<p class="w" style="left:688px;top:1018px">矩形</p><p class="d" style="left:688px;top:1039px">圆形</p><p class="d" style="left:688px;top:1060px">多边形</p>
<div class="clip" style="clip-path:inset(0 560px 0 685px)"><p class="d" style="left:688px;top:1081px">自由绘制</p></div>

<div class="a" style="left:981px;top:974px;width:50px;height:17px;background:#0d0e10;border:1px solid #ccc;border-radius:2px"></div>
<p class="w" style="left:987px;top:983px"><span style="font-size:6px">⚲</span>退出编辑</p>

<!-- canvas -->
<div class="a" style="left:437px;top:1099px;width:402px;height:283px;background:#f0f0ea;box-shadow:0 0 0 1px #000"></div>
<div class="a" style="left:679px;top:1091px;width:4px;height:8px;background:#888"></div><div class="a" style="left:679px;top:1099px;width:4px;height:3px;background:#777;border-radius:0 0 2px 2px"></div>
<svg class="a" style="left:0;top:0" width="1280" height="1649">
<rect x="725" y="1148" width="84" height="234" fill="#ab917a"/>
<rect x="725" y="1148" width="84" height="234" fill="#000" filter="url(#wv)" opacity=".22"/>
<rect x="725" y="1148" width="84" height="7" fill="#c9b7a2"/>
<rect x="725" y="1154" width="84" height="1" fill="#7f6a56"/>
<rect x="733" y="1274" width="3" height="10" fill="#111"/><rect x="735" y="1275" width="9" height="3" fill="#111"/>
</svg>

<svg class="a" style="left:0;top:0" width="1280" height="1649" fill="none">
<path d="M363 1488h17" stroke="#7c1818" stroke-width="1.500"/><path d="M363 1488v18" stroke="#2f7d2b" stroke-width="1.500"/>
<path d="M415.500 1495v5.500h36v-5.500" stroke="#c8c8c8" stroke-width="1.500"/>
</svg>
<p style="left:385px;top:1489px;color:#c01818;font-size:8px">X</p><p style="left:361px;top:1516px;color:#2fc42b;font-size:8px">Y</p><p class="w" style="left:442px;top:1496px;font-size:8px">1m</p>

<!-- Right panel 2 -->
<div class="a" style="left:1047px;top:965px;width:140px;height:576px;background:#28292d"></div>
<div class="a" style="left:1047px;top:965px;width:140px;height:23px;background:#1c1d20"></div><p class="w" style="left:1058px;top:979px;font-size:9.500px;color:#ccc">物体详情</p>
<div class="tri" style="left:1061px;top:1000px"></div><p class="m" style="left:1070px;top:1003px">硬装设计</p>
<p class="m" style="left:1070px;top:1020px">名称</p><div class="inp" style="left:1070px;top:1026px;width:102px;height:15px"></div><p class="d" style="left:1077px;top:1034px">20</p>
<p class="m" style="left:1070px;top:1055px">模型编码</p><div class="inp" style="left:1070px;top:1063px;width:102px;height:14px"></div><p class="d" style="left:1077px;top:1071px">20</p>
<p class="m" style="left:1070px;top:1089px">素材</p><div class="inp" style="left:1070px;top:1095px;width:102px;height:43px"></div><div class="a" style="left:1070px;top:1095px;width:52px;height:43px;background:#fff;box-shadow:0 0 0 1px #000"></div>
<svg class="a" style="left:1136px;top:1106px" width="24" height="22" stroke="#aaa" fill="none"><use href="#swap"/></svg>
<p class="m" style="left:1070px;top:1151px">颜色</p><div class="a" style="left:1070px;top:1157px;width:103px;height:16px;background:#fff;box-shadow:0 0 0 1px #000;border-radius:1px"></div>
<p class="m" style="left:1070px;top:1186px">厂家色号</p><div class="inp" style="left:1070px;top:1193px;width:102px;height:14px"></div><p class="d" style="left:1078px;top:1200px">20</p>
<p class="m" style="left:1070px;top:1221px">挤出（mm）</p><div class="inp" style="left:1070px;top:1227px;width:102px;height:15px"></div><p class="d" style="left:1078px;top:1235px">20</p><p class="m" style="left:1166px;top:1235px;font-size:5px;line-height:5px;margin-top:-5px;white-space:normal;width:5px">▴<br>▾</p>
<p class="m" style="left:1070px;top:1256px">偏移（mm）</p><div class="inp" style="left:1070px;top:1262px;width:102px;height:15px"></div><p class="d" style="left:1078px;top:1270px">2</p><p class="d" style="left:1078px;top:1278px">0</p>
<p class="d" style="left:1071px;top:1285px">正值向外，负值向内</p>
<div class="a" style="left:1178px;top:990px;width:3px;height:73px;background:#77787b"></div>
<div class="btn" style="left:1059px;top:1299px;width:114px;height:15px;background:#37383c;border-color:#3f4044"></div><p class="d" style="left:1099px;top:1307px">编辑墙面</p>
<div class="btn" style="left:1059px;top:1325px;width:114px;height:15px;background:#37383c;border-color:#3f4044"></div><p class="d" style="left:1075px;top:1333px">应用到该房间所有墙面</p>
<div class="tri" style="left:1061px;top:1350px"></div><p class="m" style="left:1070px;top:1353px">素材施工项</p>
<div class="tri" style="left:1072px;top:1365px"></div><p class="m" style="left:1081px;top:1368px">客餐厅施工项</p>
<div class="tri" style="left:1084px;top:1380px"></div><p class="m" style="left:1093px;top:1383px">内墙乳胶漆（面漆）</p>
<div class="a" style="left:1163px;top:1377px;width:10px;height:10px;background:#1668dc;border-radius:2px"></div><svg class="a" style="left:1163px;top:1377px" width="10" height="10" fill="none" stroke="#fff"><path d="M2 5l2 2 4-4"/></svg>
<p class="m" style="left:1093px;top:1398px">施工方式</p>
<div class="a" style="left:1093px;top:1403px;width:80px;height:14px;background:#3a3b3f"></div><p class="w" style="left:1101px;top:1411px">乳胶漆涂</p><div class="tri" style="left:1159px;top:1409px"></div>
<div class="a" style="left:1093px;top:1418px;width:80px;height:14px;background:#1c1d20"></div>
<div class="a" style="left:1093px;top:1432px;width:80px;height:15px;background:#3a3b3f"></div>
<p class="m" style="left:1113px;top:1420px">刷</p><p class="w" style="left:1101px;top:1426px">乳胶漆涂</p><p class="m" style="left:1113px;top:1435px">刷</p><p class="m" style="left:1100px;top:1441px">胶漆刷</p>
<div class="tri" style="left:1061px;top:1458px"></div><p class="m" style="left:1070px;top:1461px">施工项</p>
<div class="trr" style="left:1073px;top:1472px"></div><p class="m" style="left:1081px;top:1475px">全局施工项</p>
<div class="tri" style="left:1072px;top:1487px"></div><p class="m" style="left:1081px;top:1490px">客餐厅施工项</p>
<div class="tri" style="left:1084px;top:1502px"></div><p class="m" style="left:1093px;top:1505px">内墙乳胶漆（面漆）</p>
<div class="a" style="left:1163px;top:1499px;width:10px;height:10px;border:1px solid #3d3e42;border-radius:2px;background:#222"></div>
<p class="m" style="left:1093px;top:1520px">施工方式</p>
<div class="a" style="left:1093px;top:1526px;width:80px;height:14px;background:#3a3b3f"></div><p class="w" style="left:1101px;top:1533px">乳胶漆涂</p><div class="tri" style="left:1159px;top:1531px"></div>
<div class="a" style="left:93px;top:1540px;width:1094px;height:1px;background:#000"></div>
</div>
</body></html>
